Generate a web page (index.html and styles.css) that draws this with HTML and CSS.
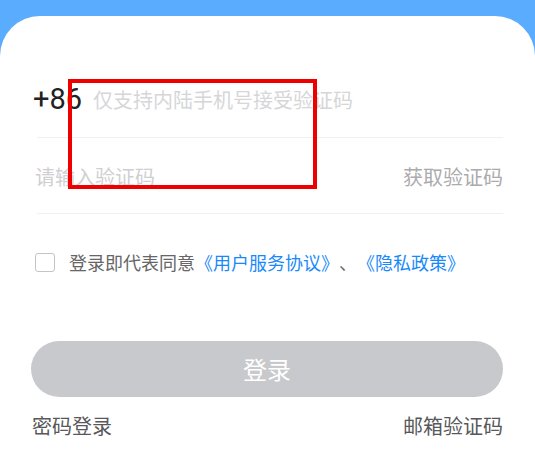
FILE: index.html
```html
<!DOCTYPE html>
<html lang="zh-CN">
<head>
<meta charset="utf-8">
<title>登录</title>
<link rel="stylesheet" href="styles.css">
</head>
<body>
<div class="page">
  <div class="card">
    <div class="field phone-field">
      <span class="prefix">+86</span>
      <span class="placeholder">仅支持内陆手机号接受验证码</span>
    </div>
    <div class="divider"></div>
    <div class="field code-field">
      <span class="placeholder">请输入验证码</span>
      <span class="get-code">获取验证码</span>
    </div>
    <div class="divider"></div>
    <div class="agree">
      <span class="checkbox"></span>
      <span class="agree-text">登录即代表同意<span class="link">《用户服务协议》</span>、<span class="link">《隐私政策》</span></span>
    </div>
    <div class="login-btn">登录</div>
    <div class="footer-links">
      <span class="alt-link">密码登录</span>
      <span class="alt-link">邮箱验证码</span>
    </div>
  </div>
  <div class="highlight"></div>
</div>
</body>
</html>
```

FILE: styles.css
```css
html, body {
  margin: 0;
  padding: 0;
}
body {
  background: #5aacff;
  font-family: "Noto Sans CJK SC", "Noto Sans", sans-serif;
  width: 535px;
  height: 453px;
  overflow: hidden;
  text-spacing-trim: space-all;
}
.page {
  position: relative;
  padding-top: 16px;
  height: 437px;
}
.card {
  background: #ffffff;
  border-radius: 40px 40px 0 0;
  height: 437px;
  padding: 46px 32px 0 32px;
  box-sizing: border-box;
}
.field {
  display: flex;
  align-items: center;
}
.phone-field {
  height: 75px;
}
.code-field {
  height: 75px;
  padding-top: 2px;
  box-sizing: border-box;
  padding-left: 3px;
  justify-content: space-between;
}
.divider {
  height: 1px;
  background: #f0f0f0;
  margin-left: 5px;
}
.prefix {
  font-family: Roboto, "Noto Sans", sans-serif;
  font-size: 29px;
  color: #222222;
  line-height: 1;
  margin-left: 1px;
  margin-right: 11px;
}
.placeholder {
  font-size: 20px;
  color: #cfcfd2;
  line-height: 1;
}
.phone-field .placeholder {
  color: #d6d6d8;
}
.get-code {
  font-size: 20px;
  color: #ababae;
  line-height: 1;
}
.agree {
  display: flex;
  align-items: center;
  margin-top: 38px;
  padding-left: 3px;
  height: 20px;
}
.checkbox {
  width: 20px;
  height: 19px;
  border: 1.5px solid #c4c4c6;
  border-radius: 3px;
  box-sizing: border-box;
  margin-right: 14px;
  flex: none;
}
.agree-text {
  font-size: 18px;
  color: #666666;
  line-height: 1;
  text-spacing-trim: space-all;
  font-feature-settings: "halt" 0, "chws" 0;
}
.link {
  color: #1989fa;
}
.login-btn {
  margin-top: 69px;
  margin-left: -1px;
  height: 56px;
  border-radius: 28px;
  background: #c8c9cc;
  color: #ffffff;
  font-size: 24px;
  display: flex;
  align-items: center;
  justify-content: center;
  padding-bottom: 2px;
  box-sizing: border-box;
}
.footer-links {
  display: flex;
  justify-content: space-between;
  margin-top: 15px;
  line-height: 28px;
}
.alt-link {
  font-size: 20px;
  color: #58585a;
}
.highlight {
  position: absolute;
  left: 68px;
  top: 79px;
  width: 249px;
  height: 110px;
  border: 4px solid #ee0000;
  box-sizing: border-box;
}
```
